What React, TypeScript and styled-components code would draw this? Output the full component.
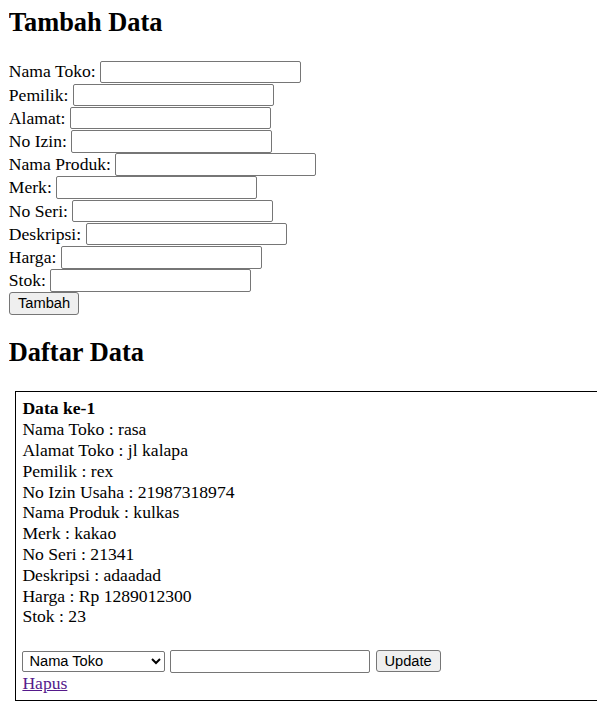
import React from "react";
import styled, { createGlobalStyle } from "styled-components";

const Global = createGlobalStyle`
  body {
    margin: 8.8px;
    background: #ffffff;
    color: #000000;
    font-family: "Liberation Serif", "Times New Roman", serif;
    font-size: 17.6px;
  }
`;

const Heading = styled.h2<{ $first?: boolean }>`
  margin: ${(p) => (p.$first ? "0" : "24px")} 0 25.4px;
  font-size: 26.4px;
  line-height: 26px;
  font-weight: bold;
`;

const Form = styled.form`
  display: flex;
  flex-direction: column;
  align-items: flex-start;
`;

const FieldRow = styled.div`
  display: flex;
  align-items: center;
  gap: 4.4px;
  height: 23.2px;
`;

const Label = styled.label`
  line-height: 20.8px;
  white-space: nowrap;
`;

const TextInput = styled.input<{ $w?: number }>`
  box-sizing: border-box;
  width: ${(p) => p.$w ?? 201}px;
  height: 22.5px;
  margin: 0;
  padding: 1px 2px;
  border: 1px solid #767676;
  border-radius: 2px;
  background: #ffffff;
  font-family: "Liberation Sans", Arial, sans-serif;
  font-size: 14.67px;
`;

const Button = styled.button<{ $w: number; $h: number }>`
  box-sizing: border-box;
  width: ${(p) => p.$w}px;
  height: ${(p) => p.$h}px;
  margin: 0;
  padding: 0;
  border: 1px solid #767676;
  border-radius: 3px;
  background: #efefef;
  color: #000000;
  font-family: "Liberation Sans", Arial, sans-serif;
  font-size: 14.67px;
  line-height: 1;
`;

/* The card runs past the right edge of the window in the reference,
   so only its top, left and bottom borders are visible. */
const Card = styled.div`
  margin: 0 -8.8px 0 6px;
  padding: 6.6px;
  border: 1px solid #000000;
  border-right: none;
`;

const Line = styled.div<{ $bold?: boolean }>`
  line-height: 20.8px;
  height: 20.8px;
  font-weight: ${(p) => (p.$bold ? "bold" : "normal")};
  white-space: nowrap;
`;

const Controls = styled.div`
  display: flex;
  align-items: center;
  gap: 5.6px;
  height: 22.5px;
  margin-top: 2px;
`;

const Select = styled.select`
  box-sizing: border-box;
  width: 142.5px;
  height: 20.5px;
  margin: 0;
  border: 1px solid #767676;
  border-radius: 2px;
  background: #ffffff;
  color: #000000;
  font-family: "Liberation Sans", Arial, sans-serif;
  font-size: 14.67px;
  padding: 0 2px;
`;

const LinkLine = styled.div`
  line-height: 20.8px;
`;

const DeleteLink = styled.a`
  color: #551a8b;
  text-decoration: underline;
  cursor: pointer;
`;

const fields = [
  "Nama Toko",
  "Pemilik",
  "Alamat",
  "No Izin",
  "Nama Produk",
  "Merk",
  "No Seri",
  "Deskripsi",
  "Harga",
  "Stok",
];

const data = [
  ["Nama Toko", "rasa"],
  ["Alamat Toko", "jl kalapa"],
  ["Pemilik", "rex"],
  ["No Izin Usaha", "21987318974"],
  ["Nama Produk", "kulkas"],
  ["Merk", "kakao"],
  ["No Seri", "21341"],
  ["Deskripsi", "adaadad"],
  ["Harga", "Rp 1289012300"],
  ["Stok", "23"],
];

export default function App() {
  return (
    <>
      <Global />
      <Heading $first>Tambah Data</Heading>
      <Form onSubmit={(e) => e.preventDefault()}>
        {fields.map((f) => (
          <FieldRow key={f}>
            <Label>{f}:</Label>
            <TextInput type="text" />
          </FieldRow>
        ))}
        <Button type="submit" $w={70.5} $h={23.4}>
          Tambah
        </Button>
      </Form>
      <Heading>Daftar Data</Heading>
      <Card>
        <Line $bold>Data ke-1</Line>
        {data.map(([k, v]) => (
          <Line key={k}>
            {k} : {v}
          </Line>
        ))}
        <Line />
        <Controls>
          <Select defaultValue="Nama Toko">
            <option>Nama Toko</option>
            <option>Alamat Toko</option>
            <option>Pemilik</option>
            <option>No Izin Usaha</option>
            <option>Nama Produk</option>
            <option>Merk</option>
            <option>No Seri</option>
            <option>Deskripsi</option>
            <option>Harga</option>
            <option>Stok</option>
          </Select>
          <TextInput type="text" $w={199.5} />
          <Button type="button" $w={65} $h={22.4}>
            Update
          </Button>
        </Controls>
        <LinkLine>
          <DeleteLink href="#">Hapus</DeleteLink>
        </LinkLine>
      </Card>
    </>
  );
}
